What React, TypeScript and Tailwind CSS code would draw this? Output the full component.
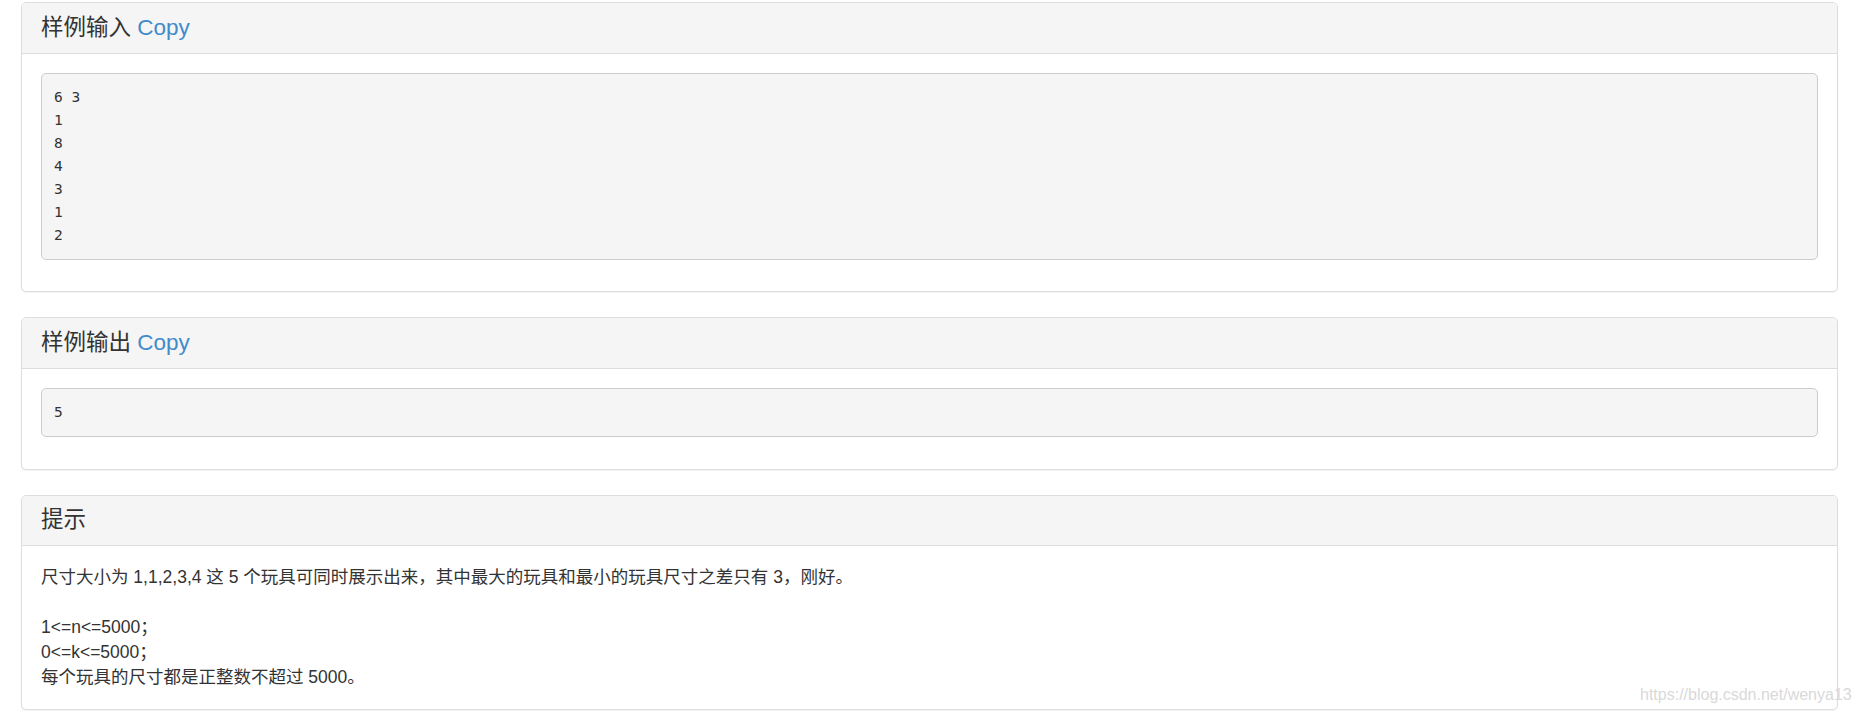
import React from "react";

const SANS = `font-["Helvetica_Neue",Helvetica,Arial,"Liberation_Sans","Noto_Sans_CJK_SC",sans-serif]`;

type PanelProps = {
  title: string;
  copy?: boolean;
  children: React.ReactNode;
  last?: boolean;
};

function Panel({ title, copy, children, last }: PanelProps) {
  return (
    <div
      className={`rounded-[5px] border border-[#ddd] bg-white shadow-[0_1px_1px_rgba(0,0,0,0.05)] ${
        last ? "" : "mb-[25px]"
      }`}
    >
      {/* HEADING */}
      <div className="rounded-t-[4px] border-b border-[#ddd] bg-[#f5f5f5] px-[19px] py-[12.5px]">
        <h3 className="text-[22.5px] leading-[24.75px] text-[#333]">
          {title}
          {copy && (
            <>
              {" "}
              <a className="cursor-pointer text-[#428bca]">Copy</a>
            </>
          )}
        </h3>
      </div>
      {/* BODY */}
      <div className="p-[19px]">{children}</div>
    </div>
  );
}

function Sample({ text }: { text: string }) {
  return (
    <pre className="mb-[12.5px] rounded-[5px] border border-[#ccc] bg-[#f5f5f5] px-[12px] py-[12px] font-['Consolas','DejaVu_Sans_Mono',monospace] text-[14.5px] leading-[23px] text-[#333] whitespace-pre">
      {text}
    </pre>
  );
}

export default function App() {
  return (
    <main className={`relative min-h-screen bg-white pt-[2px] ${SANS}`}>
      <div className="ml-[21px] mr-[20px]">
        <Panel title="样例输入" copy>
          <Sample text={"6 3\n1\n8\n4\n3\n1\n2"} />
        </Panel>

        <Panel title="样例输出" copy>
          <Sample text="5" />
        </Panel>

        <Panel title="提示" last>
          <div className="text-[17.5px] leading-[25px] text-[#333]">
            <div>尺寸大小为 1,1,2,3,4 这 5 个玩具可同时展示出来，其中最大的玩具和最小的玩具尺寸之差只有 3，刚好。</div>
            <div>&nbsp;</div>
            <div>1&lt;=n&lt;=5000；</div>
            <div>0&lt;=k&lt;=5000；</div>
            <div>每个玩具的尺寸都是正整数不超过 5000。</div>
          </div>
        </Panel>
      </div>

      {/* WATERMARK */}
      <div className="pointer-events-none absolute left-[1640px] top-[686px] text-[16px] leading-[18px] whitespace-nowrap text-[#d9d9d9]">
        https://blog.csdn.net/wenya13
      </div>
    </main>
  );
}
